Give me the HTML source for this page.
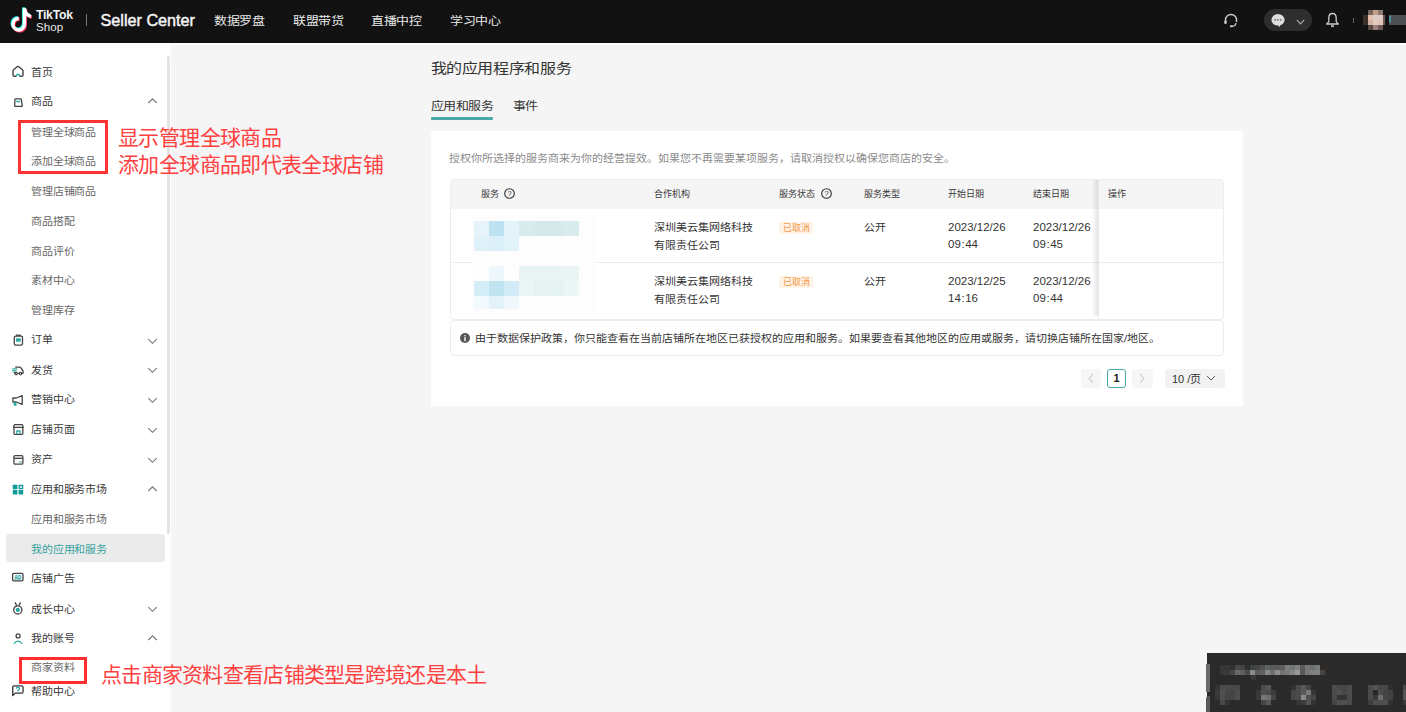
<!DOCTYPE html>
<html lang="zh-CN"><head><meta charset="utf-8">
<style>
*{margin:0;padding:0;box-sizing:border-box}
html,body{width:1406px;height:712px;overflow:hidden}
body{position:relative;background:#f5f5f5;font-family:"Liberation Sans",sans-serif;color:#333}
.a{position:absolute;white-space:nowrap}
#nav{position:absolute;left:0;top:0;width:1406px;height:43px;background:#121212}
#strip{position:absolute;left:0;top:43px;width:1406px;height:2px;background:#fff}
#side{position:absolute;left:0;top:45px;width:171px;height:667px;background:#fff}
.navt{position:absolute;top:13.3px;font-size:13px;letter-spacing:-0.27px;transform:scaleY(0.915);transform-origin:0 50%;line-height:16px;color:#e8e8e8}
.si{position:absolute;left:31px;margin-top:-0.5px;font-size:11px;letter-spacing:-0.15px;transform:scaleY(0.9);transform-origin:0 50%;line-height:14px;color:#383838}
.sub{color:#666}
.ico{position:absolute;left:11px;width:14px;height:14px}
.chev{position:absolute;left:147px;width:11px;height:7px}
.red{color:#ff4040;font-size:21px;letter-spacing:-0.62px;line-height:27.15px}
.th{position:absolute;top:188.2px;font-size:9px;font-weight:500;line-height:13px;color:#3a3a3a}
.td{position:absolute;font-size:11px;line-height:18.7px;transform:scaleY(0.92);transform-origin:0 50%;color:#333}
.selt{color:#36a3a0}
.tag{font-size:9px;line-height:12px;padding:0 3.5px;background:#fff3e6;color:#f29a4a;border-radius:2px}
.dt{position:absolute;font-size:11.5px;line-height:17px;color:#333}
</style></head><body>
<div id="nav">
  <!-- tiktok note -->
  <svg class="a" style="left:10px;top:5px" width="26" height="30" viewBox="0 0 26 30">
    <g fill="none" stroke-width="3.3">
      <g stroke="#25f4ee" transform="translate(-0.9,-0.9)"><path d="M14.5 3.5 V19.25 a5.75 5.75 0 1 1 -5.75 -5.75"/><path d="M14.5 3.5 C15 7.5 17.5 10.5 21 11.5"/></g>
      <g stroke="#fe2c55" transform="translate(0.9,0.9)"><path d="M14.5 3.5 V19.25 a5.75 5.75 0 1 1 -5.75 -5.75"/><path d="M14.5 3.5 C15 7.5 17.5 10.5 21 11.5"/></g>
      <g stroke="#fff"><path d="M14.5 3.5 V19.25 a5.75 5.75 0 1 1 -5.75 -5.75"/><path d="M14.5 3.5 C15 7.5 17.5 10.5 21 11.5"/></g>
    </g>
  </svg>
  <div class="a" style="left:36px;top:9px;font-size:12.3px;line-height:13px;font-weight:bold;color:#f4f4f4;letter-spacing:-0.3px">TikTok</div>
  <div class="a" style="left:36px;top:20px;font-size:11.6px;line-height:13px;color:#e6e6e6">Shop</div>
  <div class="a" style="left:86px;top:14px;width:1px;height:12px;background:#777"></div>
  <div class="a" style="left:100.5px;top:11.2px;font-size:16.2px;line-height:18px;color:#f6f6f6;-webkit-text-stroke:0.45px #f6f6f6">Seller Center</div>
  <div class="navt" style="left:214px">数据罗盘</div>
  <div class="navt" style="left:293px">联盟带货</div>
  <div class="navt" style="left:371px">直播中控</div>
  <div class="navt" style="left:450px">学习中心</div>
</div>
<div id="strip"></div>
<div id="side"></div>
<svg width="0" height="0" style="position:absolute">
<defs>
<g id="i-home" fill="none" stroke-width="1.4" stroke-linejoin="round"><path d="M5.4 11.2 H3.2 Q2 11.2 2 10 V5.9 Q2 5.2 2.6 4.7 L6.1 1.8 Q7 1.1 7.9 1.8 L11.4 4.7 Q12 5.2 12 5.9 V10 Q12 11.2 10.8 11.2 H8.6" stroke="#444"/><path d="M5.6 11.2 V10.6 a1.4 1.4 0 0 1 2.8 0 V11.2" stroke="#2aa6a0"/></g>
<g id="i-bag" fill="none" stroke-width="1.3" stroke-linejoin="round"><path d="M4.6 3.95 H9.7 Q10.3 3.95 10.4 4.6 L11.3 10.8 Q11.35 11.45 10.7 11.45 H4.3 Q3.65 11.45 3.7 10.8 L3.9 4.6 Q4 3.95 4.6 3.95 Z" stroke="#444"/><path d="M5.3 5.9 Q7.2 7.9 9.1 5.9" stroke="#2aa6a0"/></g>
<g id="i-order" fill="none" stroke-width="1.3" stroke-linejoin="round"><rect x="3.3" y="3.2" width="8.2" height="9" rx="1.4" stroke="#444"/><path d="M5.6 3.2 V2.2 H9.2 V3.2" stroke="#444"/><rect x="5.1" y="5.3" width="4.6" height="3.4" fill="#2aa6a0" stroke="none"/></g>
<g id="i-truck" fill="none" stroke-width="1.25" stroke-linejoin="round"><path d="M4.2 4.1 H8.4 Q9.3 4.1 9.9 4.9 L11.5 7 Q12.1 7.8 12.1 8.8 V10.3 H11 M7.9 10.3 H6.6 M3.8 10.3 H3.4 V9" stroke="#444"/><circle cx="5.2" cy="10.6" r="1.15" stroke="#444"/><circle cx="9.5" cy="10.6" r="1.15" stroke="#444"/><path d="M1.3 5.9 H6.2 M1 7.8 H5.6" stroke="#2aa6a0" stroke-width="1.2"/></g>
<g id="i-mega" fill="none" stroke-width="1.3" stroke-linejoin="round"><path d="M1.9 5 H5.2 L11.2 2.6 V11.4 L5.2 9 H1.9 Z" stroke="#444"/><path d="M3 9.2 L3.6 12.2 H5 L4.6 9.3" stroke="#2aa6a0" fill="#2aa6a0"/></g>
<g id="i-store" fill="none" stroke-width="1.3" stroke-linejoin="round"><path d="M3 5.3 V11.6 Q3 12.3 3.7 12.3 H11.1 Q11.8 12.3 11.8 11.6 V5.3 M2.6 5.4 H12.2 L11.6 3.2 Q11.4 2.6 10.8 2.6 H4 Q3.4 2.6 3.2 3.2 Z" stroke="#444"/><path d="M5.8 12.1 V9 H9 V12.1" stroke="#2aa6a0"/></g>
<g id="i-wallet" fill="none" stroke-width="1.3" stroke-linejoin="round"><rect x="2.9" y="3.6" width="9" height="8.6" rx="1.3" stroke="#444"/><path d="M2.9 6.3 H11.9" stroke="#444"/><path d="M8.4 10 H10.6" stroke="#2aa6a0"/></g>
<g id="i-apps" fill="#129c97"><rect x="1.8" y="2.7" width="4.6" height="4.6" rx="0.6"/><rect x="7.6" y="2.7" width="4.6" height="4.6" rx="0.6"/><rect x="1.8" y="7.9" width="4.6" height="4.6" rx="0.6"/><rect x="7.6" y="7.9" width="4.6" height="4.6" rx="0.6"/><circle cx="9.9" cy="5" r="1.1" fill="#fff"/></g>
<g id="i-ad" fill="none" stroke-width="1.3"><rect x="1.6" y="2.3" width="10.4" height="7.6" rx="1.3" stroke="#444"/><rect x="3.2" y="3.9" width="7.2" height="4.4" fill="#d9efee" stroke="none"/><text x="6.8" y="7.5" font-size="4.6" font-family="Liberation Sans" font-weight="bold" text-anchor="middle" fill="#2aa6a0" stroke="none">AD</text><path d="M3.4 8.1 H10.2" stroke="#2aa6a0" stroke-width="0.8"/></g>
<g id="i-medal" fill="none" stroke-width="1.3"><circle cx="6.8" cy="8.9" r="4.1" stroke="#444"/><circle cx="6.8" cy="8.9" r="2.1" fill="#2aa6a0" stroke="none"/><path d="M4 1.4 L5.7 4.6 M9.6 1.4 L7.9 4.6" stroke="#444"/></g>
<g id="i-user" fill="none" stroke-width="1.3"><circle cx="7.1" cy="4.9" r="2" stroke="#444"/><path d="M2.9 12.6 Q7.1 7.6 11.3 12.6" stroke="#2aa6a0"/></g>
<g id="i-help" fill="none" stroke-width="1.3" stroke-linejoin="round"><path d="M3.1 1.85 H10.6 Q12.05 1.85 12.05 3.3 V7.7 Q12.05 9.15 10.6 9.15 H4.2 L1.75 11.6 V3.3 Q1.75 1.85 3.1 1.85 Z" stroke="#333"/><path d="M5.3 4.7 Q5.4 3.2 6.9 3.2 Q8.5 3.2 8.5 4.5 Q8.5 5.4 7.5 5.9 Q6.9 6.2 6.9 7" stroke="#2aa6a0" stroke-width="1.25"/><circle cx="6.9" cy="8.1" r="0.65" fill="#2aa6a0" stroke="none"/></g>
<path id="c-up" d="M1.3 5 L5.5 0.8 L9.7 5" fill="none" stroke="#777" stroke-width="1.1"/>
<path id="c-down" d="M1.3 2.1 L5.5 6.3 L9.7 2.1" fill="none" stroke="#777" stroke-width="1.1"/>
</defs></svg>
<div class="a" style="left:167px;top:56px;width:3px;height:478px;background:#e4e4e4;border-radius:2px"></div>
<div class="si" style="top:65.05px">首页</div>
<svg class="ico" style="top:64.8px" viewBox="0 0 14 14"><use href="#i-home"/></svg>
<div class="si" style="top:94.1px">商品</div>
<svg class="ico" style="top:94.6px" viewBox="0 0 14 14"><use href="#i-bag"/></svg>
<svg class="chev" style="top:98.1px" viewBox="0 0 11 7"><use href="#c-up"/></svg>
<div class="si sub" style="top:125.15px">管理全球商品</div>
<div class="si sub" style="top:154.2px">添加全球商品</div>
<div class="si sub" style="top:184.0px">管理店铺商品</div>
<div class="si sub" style="top:214.05px">商品搭配</div>
<div class="si sub" style="top:244.1px">商品评价</div>
<div class="si sub" style="top:273.4px">素材中心</div>
<div class="si sub" style="top:303.2px">管理库存</div>
<div class="si" style="top:332.0px">订单</div>
<svg class="ico" style="top:333.0px" viewBox="0 0 14 14"><use href="#i-order"/></svg>
<svg class="chev" style="top:336.5px" viewBox="0 0 11 7"><use href="#c-down"/></svg>
<div class="si" style="top:363.05px">发货</div>
<svg class="ico" style="top:362.8px" viewBox="0 0 14 14"><use href="#i-truck"/></svg>
<svg class="chev" style="top:366.3px" viewBox="0 0 11 7"><use href="#c-down"/></svg>
<div class="si" style="top:392.1px">营销中心</div>
<svg class="ico" style="top:392.6px" viewBox="0 0 14 14"><use href="#i-mega"/></svg>
<svg class="chev" style="top:396.1px" viewBox="0 0 11 7"><use href="#c-down"/></svg>
<div class="si" style="top:422.15px">店铺页面</div>
<svg class="ico" style="top:422.4px" viewBox="0 0 14 14"><use href="#i-store"/></svg>
<svg class="chev" style="top:425.9px" viewBox="0 0 11 7"><use href="#c-down"/></svg>
<div class="si" style="top:452.2px">资产</div>
<svg class="ico" style="top:452.2px" viewBox="0 0 14 14"><use href="#i-wallet"/></svg>
<svg class="chev" style="top:455.7px" viewBox="0 0 11 7"><use href="#c-down"/></svg>
<div class="si" style="top:482.0px">应用和服务市场</div>
<svg class="ico" style="top:482.0px" viewBox="0 0 14 14"><use href="#i-apps"/></svg>
<svg class="chev" style="top:485.5px" viewBox="0 0 11 7"><use href="#c-up"/></svg>
<div class="si sub" style="top:512.05px">应用和服务市场</div>
<div class="a" style="left:5.5px;top:534.2px;width:159.7px;height:27.8px;background:#ebebeb;border-radius:3.5px"></div>
<div class="si selt" style="top:542.1px">我的应用和服务</div>
<div class="si" style="top:571.4px">店铺广告</div>
<svg class="ico" style="top:571.4px" viewBox="0 0 14 14"><use href="#i-ad"/></svg>
<div class="si" style="top:602.2px">成长中心</div>
<svg class="ico" style="top:601.2px" viewBox="0 0 14 14"><use href="#i-medal"/></svg>
<svg class="chev" style="top:604.7px" viewBox="0 0 11 7"><use href="#c-down"/></svg>
<div class="si" style="top:631.0px">我的账号</div>
<svg class="ico" style="top:631.0px" viewBox="0 0 14 14"><use href="#i-user"/></svg>
<svg class="chev" style="top:634.5px" viewBox="0 0 11 7"><use href="#c-up"/></svg>
<div class="si sub" style="top:660.05px">商家资料</div>
<svg class="ico" style="top:684px" viewBox="0 0 14 14"><use href="#i-help"/></svg>
<div class="si" style="top:684.0px">帮助中心</div>
<!-- main -->
<div class="a" style="left:430.5px;top:60px;font-size:16px;letter-spacing:-0.35px;line-height:18px;transform:scaleY(0.84);transform-origin:0 50%;color:#333">我的应用程序和服务</div>
<div class="a" style="left:430.5px;top:99px;font-size:13px;letter-spacing:-0.4px;line-height:15px;transform:scaleY(0.85);transform-origin:0 50%;color:#333">应用和服务</div>
<div class="a" style="left:512.5px;top:99px;font-size:13px;letter-spacing:-0.4px;line-height:15px;transform:scaleY(0.85);transform-origin:0 50%;color:#333">事件</div>
<div class="a" style="left:431px;top:117px;width:62px;height:2.5px;background:#4aa9a7;border-radius:1px"></div>
<div id="card" class="a" style="left:431px;top:131px;width:812px;height:275px;background:#fff"></div>
<div class="a" style="left:449px;top:150.8px;font-size:11px;line-height:14px;color:#8a8a8a;transform:scaleY(0.91);transform-origin:0 50%">授权你所选择的服务商来为你的经营提效。如果您不再需要某项服务，请取消授权以确保您商店的安全。</div>
<div class="a" style="left:450px;top:178.5px;width:774px;height:141px;border:1px solid #ececec;border-radius:4px;overflow:hidden">
  <div class="a" style="left:0;top:0;width:774px;height:29.3px;background:#f5f5f5"></div>
  <div class="a" style="left:0;top:82.8px;width:774px;height:1px;background:#ececec"></div>
</div>

<div class="a" style="left:472px;top:215px;width:124px;height:48px;background:#fdfdfd"></div>
<div class="a" style="left:472px;top:262px;width:124px;height:50px;background:#fdfdfd"></div>
<div class="a" style="left:474px;top:221px;width:15px;height:15px;background:#e6f4fa"></div>
<div class="a" style="left:489px;top:221px;width:15px;height:15px;background:#bde2f1"></div>
<div class="a" style="left:504px;top:221px;width:15px;height:15px;background:#e4f3f9"></div>
<div class="a" style="left:519px;top:221px;width:15px;height:15px;background:#d8ebeb"></div>
<div class="a" style="left:534px;top:221px;width:15px;height:15px;background:#d5e9e9"></div>
<div class="a" style="left:549px;top:221px;width:15px;height:15px;background:#d6e9e9"></div>
<div class="a" style="left:564px;top:221px;width:15px;height:15px;background:#d9ebeb"></div>
<div class="a" style="left:474px;top:236px;width:15px;height:15px;background:#dff1f9"></div>
<div class="a" style="left:489px;top:236px;width:15px;height:15px;background:#daeff8"></div>
<div class="a" style="left:504px;top:236px;width:15px;height:15px;background:#e2f2f9"></div>
<div class="a" style="left:489px;top:266px;width:15px;height:15px;background:#eef7fb"></div>
<div class="a" style="left:519px;top:266px;width:15px;height:15px;background:#e8f3f3"></div>
<div class="a" style="left:534px;top:266px;width:15px;height:15px;background:#e8f3f3"></div>
<div class="a" style="left:549px;top:266px;width:15px;height:15px;background:#e8f3f3"></div>
<div class="a" style="left:564px;top:266px;width:15px;height:15px;background:#eaf4f4"></div>
<div class="a" style="left:474px;top:281px;width:15px;height:15px;background:#d4edf6"></div>
<div class="a" style="left:489px;top:281px;width:15px;height:15px;background:#bfe3ef"></div>
<div class="a" style="left:504px;top:281px;width:15px;height:15px;background:#d3ebf6"></div>
<div class="a" style="left:519px;top:281px;width:15px;height:15px;background:#ecf5f5"></div>
<div class="a" style="left:534px;top:281px;width:15px;height:15px;background:#e7f3f3"></div>
<div class="a" style="left:549px;top:281px;width:15px;height:15px;background:#e5f2f2"></div>
<div class="a" style="left:564px;top:281px;width:15px;height:15px;background:#edf6f6"></div>
<div class="a" style="left:474px;top:296px;width:15px;height:13px;background:#f3fafd"></div>
<div class="a" style="left:489px;top:296px;width:15px;height:13px;background:#e2f2f8"></div>
<div class="a" style="left:504px;top:296px;width:15px;height:13px;background:#f0f8fb"></div>
<div class="th" style="left:481px">服务</div><svg class="a" style="left:504px;top:188px" width="11" height="11" viewBox="0 0 11 11"><circle cx="5.5" cy="5.5" r="4.8" fill="none" stroke="#333" stroke-width="1.1"/><text x="5.5" y="8.3" font-size="7.5" font-family="Liberation Sans" text-anchor="middle" fill="#333">?</text></svg>
<div class="th" style="left:654px">合作机构</div>
<div class="th" style="left:779px">服务状态</div><svg class="a" style="left:820.5px;top:188px" width="11" height="11" viewBox="0 0 11 11"><circle cx="5.5" cy="5.5" r="4.8" fill="none" stroke="#333" stroke-width="1.1"/><text x="5.5" y="8.3" font-size="7.5" font-family="Liberation Sans" text-anchor="middle" fill="#333">?</text></svg>
<div class="th" style="left:864px">服务类型</div>
<div class="th" style="left:948px">开始日期</div>
<div class="th" style="left:1033px">结束日期</div>
<div class="a" style="left:1092px;top:179.5px;width:6px;height:136px;background:linear-gradient(to right,rgba(0,0,0,0),rgba(0,0,0,0.1))"></div>
<div class="a" style="left:1098px;top:179.5px;width:1px;height:139px;background:#e8e8e8"></div>
<div class="th" style="left:1108px">操作</div>
<div class="td" style="left:654px;top:217.6px">深圳美云集网络科技<br>有限责任公司</div>
<div class="td" style="left:654px;top:271.8px">深圳美云集网络科技<br>有限责任公司</div>
<div class="a tag" style="left:779px;top:222px">已取消</div>
<div class="a tag" style="left:779px;top:276.3px">已取消</div>
<div class="td" style="left:864px;top:217.6px">公开</div>
<div class="td" style="left:864px;top:271.8px">公开</div>
<div class="dt" style="left:948px;top:219px">2023/12/26<br>09<span style="margin:0 0.6px">:</span>44</div>
<div class="dt" style="left:1033px;top:219px">2023/12/26<br>09<span style="margin:0 0.6px">:</span>45</div>
<div class="dt" style="left:948px;top:273.3px">2023/12/25<br>14<span style="margin:0 0.6px">:</span>16</div>
<div class="dt" style="left:1033px;top:273.3px">2023/12/26<br>09<span style="margin:0 0.6px">:</span>44</div>
<div class="a" style="left:450px;top:320px;width:774px;height:35.5px;border:1px solid #ececec;border-radius:4px"></div>
<svg class="a" style="left:460px;top:332.5px" width="10" height="10" viewBox="0 0 10 10"><circle cx="5" cy="5" r="5" fill="#555"/><rect x="4.3" y="4.2" width="1.4" height="4" fill="#fff"/><circle cx="5" cy="2.7" r="0.8" fill="#fff"/></svg>
<div class="a" style="left:475px;top:330.5px;font-size:11px;font-weight:500;line-height:14px;color:#333;transform:scaleY(0.88);transform-origin:0 50%">由于数据保护政策，你只能查看在当前店铺所在地区已获授权的应用和服务。如果要查看其他地区的应用或服务，请切换店铺所在国家/地区。</div>
<div class="a" style="left:1081px;top:369px;width:20px;height:18.5px;background:#f6f6f6;border-radius:3px"></div>
<svg class="a" style="left:1087px;top:373px" width="8" height="11" viewBox="0 0 8 11"><path d="M6 1 L2 5.5 L6 10" fill="none" stroke="#bbb" stroke-width="1"/></svg>
<div class="a" style="left:1107px;top:369px;width:19px;height:18.5px;border:1.3px solid #4aa9a7;border-radius:3px;font-size:11px;font-weight:bold;line-height:16px;text-align:center;color:#222">1</div>
<div class="a" style="left:1132px;top:369px;width:20.5px;height:18.5px;background:#f6f6f6;border-radius:3px"></div>
<svg class="a" style="left:1138px;top:373px" width="8" height="11" viewBox="0 0 8 11"><path d="M2 1 L6 5.5 L2 10" fill="none" stroke="#bbb" stroke-width="1"/></svg>
<div class="a" style="left:1165px;top:369px;width:60px;height:18.5px;background:#f2f2f2;border-radius:3px"></div>
<div class="a" style="left:1172px;top:372px;font-size:11px;line-height:15px;color:#333">10 /页</div>
<svg class="a" style="left:1206px;top:375px" width="10" height="7" viewBox="0 0 10 7"><path d="M1 1 L5 5 L9 1" fill="none" stroke="#555" stroke-width="1"/></svg>
<!-- red annotations -->
<div class="a" style="left:18px;top:120px;width:90px;height:54.4px;border:3px solid #ff3333"></div>
<div class="a red" style="left:118px;top:124px">显示管理全球商品<br>添加全球商品即代表全球店铺</div>
<div class="a" style="left:19px;top:657px;width:68px;height:26.5px;border:3px solid #ff2f2f"></div>
<div class="a red" style="left:101px;top:661.3px;letter-spacing:-0.71px">点击商家资料查看店铺类型是跨境还是本土</div>
<!-- nav right -->
<svg class="a" style="left:1223px;top:13px" width="16" height="15" viewBox="0 0 16 15"><path d="M2.5 9 V7 a5.5 5.5 0 0 1 11 0 V9" fill="none" stroke="#ccc" stroke-width="1.4"/><rect x="1.3" y="7.5" width="2.4" height="3.5" rx="1" fill="#ccc"/><path d="M13 10 Q12.5 13.3 9 13.3" fill="none" stroke="#ccc" stroke-width="1.3"/><rect x="6.8" y="12.3" width="3" height="2" rx="1" fill="#ccc"/></svg>
<div class="a" style="left:1264px;top:9px;width:48px;height:22px;background:#2e2e2e;border-radius:11px"></div>
<svg class="a" style="left:1270px;top:13px" width="16" height="16" viewBox="0 0 16 16"><ellipse cx="8" cy="6.8" rx="6.6" ry="5.8" fill="#ddd"/><path d="M7.5 11.5 L9.6 14.3 L10.2 11" fill="#ddd"/><circle cx="5.2" cy="6.8" r="0.9" fill="#666"/><circle cx="8" cy="6.8" r="0.9" fill="#666"/><circle cx="10.8" cy="6.8" r="0.9" fill="#666"/></svg>
<svg class="a" style="left:1296px;top:19px" width="9" height="6" viewBox="0 0 9 6"><path d="M0.8 0.8 L4.5 4.8 L8.2 0.8" fill="none" stroke="#aaa" stroke-width="1.2"/></svg>
<svg class="a" style="left:1325px;top:12px" width="16" height="16" viewBox="0 0 16 16"><path d="M1.6 12 H13.4 Q12 11 11.2 9.5 V6 Q11.2 1.5 7.5 1.5 Q3.8 1.5 3.8 6 V9.5 Q3 11 1.6 12 Z" fill="none" stroke="#ccc" stroke-width="1.3" stroke-linejoin="round"/><rect x="6" y="13.3" width="3" height="1.6" rx="0.6" fill="#ccc"/></svg>
<div class="a" style="left:1353px;top:18px;width:1px;height:5px;background:#667"></div>
<div class="a" style="left:1368px;top:10px;width:5px;height:5px;background:#7a675b"></div>
<div class="a" style="left:1373px;top:10px;width:5px;height:5px;background:#c09f8b"></div>
<div class="a" style="left:1378px;top:10px;width:5px;height:5px;background:#8f7c70"></div>
<div class="a" style="left:1363px;top:15px;width:5px;height:5px;background:#3d2f2a"></div>
<div class="a" style="left:1368px;top:15px;width:5px;height:5px;background:#e7bfae"></div>
<div class="a" style="left:1373px;top:15px;width:5px;height:5px;background:#d9ccc8"></div>
<div class="a" style="left:1378px;top:15px;width:5px;height:5px;background:#dfcbbf"></div>
<div class="a" style="left:1363px;top:20px;width:5px;height:5px;background:#3d2f2a"></div>
<div class="a" style="left:1368px;top:20px;width:5px;height:5px;background:#d3b2a6"></div>
<div class="a" style="left:1373px;top:20px;width:5px;height:5px;background:#e5c8bd"></div>
<div class="a" style="left:1378px;top:20px;width:5px;height:5px;background:#e0c4b8"></div>
<div class="a" style="left:1368px;top:25px;width:5px;height:5px;background:#5a4a44"></div>
<div class="a" style="left:1373px;top:25px;width:5px;height:5px;background:#9d7e7c"></div>
<div class="a" style="left:1378px;top:25px;width:5px;height:5px;background:#6e5955"></div>
<div class="a" style="left:1383px;top:15px;width:2px;height:10px;background:#6e5a54"></div>
<div class="a" style="left:1389px;top:15px;width:17px;height:10px;background:#4d5151"></div>
<div class="a" style="left:1389px;top:15px;width:2px;height:8px;background:#4a8ea0;border-radius:2px 0 0 2px"></div>
<!-- bottom right widget -->
<div class="a" style="left:1207px;top:653px;width:199px;height:59px;background:#2a2a2a"></div>
<div class="a" style="left:1205.5px;top:664px;width:4.5px;height:28px;background:#6a6a6a"></div>
<div class="a" style="left:1205.5px;top:696px;width:4.5px;height:16px;background:#5a5a5a;border-radius:3px 0 0 0"></div>
<div class="a" style="left:1220px;top:665px;width:5px;height:5px;background:#363636"></div>
<div class="a" style="left:1225px;top:665px;width:5px;height:5px;background:#363636"></div>
<div class="a" style="left:1230px;top:665px;width:5px;height:5px;background:#2e3032"></div>
<div class="a" style="left:1235px;top:665px;width:5px;height:5px;background:#474747"></div>
<div class="a" style="left:1240px;top:665px;width:5px;height:5px;background:#434240"></div>
<div class="a" style="left:1245px;top:665px;width:5px;height:5px;background:#2e302f"></div>
<div class="a" style="left:1250px;top:665px;width:5px;height:5px;background:#3d4242"></div>
<div class="a" style="left:1255px;top:665px;width:5px;height:5px;background:#464848"></div>
<div class="a" style="left:1260px;top:665px;width:5px;height:5px;background:#515151"></div>
<div class="a" style="left:1265px;top:665px;width:5px;height:5px;background:#5e6262"></div>
<div class="a" style="left:1270px;top:665px;width:5px;height:5px;background:#5a5c5c"></div>
<div class="a" style="left:1275px;top:665px;width:5px;height:5px;background:#5a5a5a"></div>
<div class="a" style="left:1280px;top:665px;width:5px;height:5px;background:#5e6060"></div>
<div class="a" style="left:1285px;top:665px;width:5px;height:5px;background:#7b7b7b"></div>
<div class="a" style="left:1290px;top:665px;width:5px;height:5px;background:#717777"></div>
<div class="a" style="left:1295px;top:665px;width:5px;height:5px;background:#7f807c"></div>
<div class="a" style="left:1300px;top:665px;width:5px;height:5px;background:#5a5a5c"></div>
<div class="a" style="left:1305px;top:665px;width:5px;height:5px;background:#787574"></div>
<div class="a" style="left:1310px;top:665px;width:5px;height:5px;background:#6c6f72"></div>
<div class="a" style="left:1315px;top:665px;width:5px;height:5px;background:#7a7a78"></div>
<div class="a" style="left:1320px;top:665px;width:5px;height:5px;background:#2e2a28"></div>
<div class="a" style="left:1220px;top:670px;width:5px;height:5px;background:#363636"></div>
<div class="a" style="left:1225px;top:670px;width:5px;height:5px;background:#3a3a3a"></div>
<div class="a" style="left:1230px;top:670px;width:5px;height:5px;background:#424850"></div>
<div class="a" style="left:1235px;top:670px;width:5px;height:5px;background:#6a6868"></div>
<div class="a" style="left:1240px;top:670px;width:5px;height:5px;background:#5e5e5a"></div>
<div class="a" style="left:1245px;top:670px;width:5px;height:5px;background:#4a4a46"></div>
<div class="a" style="left:1250px;top:670px;width:5px;height:5px;background:#8a8a88"></div>
<div class="a" style="left:1255px;top:670px;width:5px;height:5px;background:#5c5c5c"></div>
<div class="a" style="left:1260px;top:670px;width:5px;height:5px;background:#65605c"></div>
<div class="a" style="left:1265px;top:670px;width:5px;height:5px;background:#848a8c"></div>
<div class="a" style="left:1270px;top:670px;width:5px;height:5px;background:#6e706e"></div>
<div class="a" style="left:1275px;top:670px;width:5px;height:5px;background:#8b8d8c"></div>
<div class="a" style="left:1280px;top:670px;width:5px;height:5px;background:#6e7478"></div>
<div class="a" style="left:1285px;top:670px;width:5px;height:5px;background:#7f7c78"></div>
<div class="a" style="left:1290px;top:670px;width:5px;height:5px;background:#868684"></div>
<div class="a" style="left:1295px;top:670px;width:5px;height:5px;background:#9a9a98"></div>
<div class="a" style="left:1300px;top:670px;width:5px;height:5px;background:#5a5858"></div>
<div class="a" style="left:1305px;top:670px;width:5px;height:5px;background:#7a7676"></div>
<div class="a" style="left:1310px;top:670px;width:5px;height:5px;background:#7e8080"></div>
<div class="a" style="left:1315px;top:670px;width:5px;height:5px;background:#7e8486"></div>
<div class="a" style="left:1320px;top:670px;width:5px;height:5px;background:#48443e"></div>
<div class="a" style="left:1251px;top:675px;width:5px;height:5px;background:#3a3a38"></div>
<div class="a" style="left:1215px;top:685px;width:5px;height:5px;background:#333"></div>
<div class="a" style="left:1220px;top:685px;width:5px;height:5px;background:#4c4c4c"></div>
<div class="a" style="left:1225px;top:685px;width:5px;height:5px;background:#4c4c4c"></div>
<div class="a" style="left:1230px;top:685px;width:5px;height:5px;background:#4a4a4a"></div>
<div class="a" style="left:1235px;top:685px;width:5px;height:5px;background:#484848"></div>
<div class="a" style="left:1215px;top:690px;width:5px;height:5px;background:#3a3a3a"></div>
<div class="a" style="left:1220px;top:690px;width:5px;height:5px;background:#505050"></div>
<div class="a" style="left:1225px;top:690px;width:5px;height:5px;background:#474747"></div>
<div class="a" style="left:1230px;top:690px;width:5px;height:5px;background:#444"></div>
<div class="a" style="left:1235px;top:690px;width:5px;height:5px;background:#4c4c4c"></div>
<div class="a" style="left:1215px;top:695px;width:5px;height:5px;background:#363636"></div>
<div class="a" style="left:1220px;top:695px;width:5px;height:5px;background:#4e4e4e"></div>
<div class="a" style="left:1225px;top:695px;width:5px;height:5px;background:#444"></div>
<div class="a" style="left:1230px;top:695px;width:5px;height:5px;background:#454545"></div>
<div class="a" style="left:1235px;top:695px;width:5px;height:5px;background:#4e4e4e"></div>
<div class="a" style="left:1220px;top:700px;width:5px;height:5px;background:#484848"></div>
<div class="a" style="left:1225px;top:700px;width:5px;height:5px;background:#333"></div>
<div class="a" style="left:1261px;top:685px;width:5px;height:5px;background:#4a4a4a"></div>
<div class="a" style="left:1266px;top:685px;width:5px;height:5px;background:#555"></div>
<div class="a" style="left:1256px;top:690px;width:5px;height:5px;background:#383838"></div>
<div class="a" style="left:1261px;top:690px;width:5px;height:5px;background:#505050"></div>
<div class="a" style="left:1266px;top:690px;width:5px;height:5px;background:#4a4a4a"></div>
<div class="a" style="left:1271px;top:690px;width:5px;height:5px;background:#3c3c3c"></div>
<div class="a" style="left:1256px;top:695px;width:5px;height:5px;background:#383838"></div>
<div class="a" style="left:1261px;top:695px;width:5px;height:5px;background:#777"></div>
<div class="a" style="left:1266px;top:695px;width:5px;height:5px;background:#6e6e6e"></div>
<div class="a" style="left:1271px;top:695px;width:5px;height:5px;background:#454545"></div>
<div class="a" style="left:1261px;top:700px;width:5px;height:5px;background:#474747"></div>
<div class="a" style="left:1266px;top:700px;width:5px;height:5px;background:#585858"></div>
<div class="a" style="left:1291px;top:685px;width:5px;height:5px;background:#333"></div>
<div class="a" style="left:1296px;top:685px;width:5px;height:5px;background:#4a4a4a"></div>
<div class="a" style="left:1301px;top:685px;width:5px;height:5px;background:#575757"></div>
<div class="a" style="left:1306px;top:685px;width:5px;height:5px;background:#444"></div>
<div class="a" style="left:1291px;top:690px;width:5px;height:5px;background:#454545"></div>
<div class="a" style="left:1296px;top:690px;width:5px;height:5px;background:#4a4a4a"></div>
<div class="a" style="left:1301px;top:690px;width:5px;height:5px;background:#5a5a5a"></div>
<div class="a" style="left:1306px;top:690px;width:5px;height:5px;background:#7a7a7a"></div>
<div class="a" style="left:1311px;top:690px;width:5px;height:5px;background:#383838"></div>
<div class="a" style="left:1291px;top:695px;width:5px;height:5px;background:#454545"></div>
<div class="a" style="left:1296px;top:695px;width:5px;height:5px;background:#4c4c4c"></div>
<div class="a" style="left:1301px;top:695px;width:5px;height:5px;background:#8a8a8a"></div>
<div class="a" style="left:1306px;top:695px;width:5px;height:5px;background:#505050"></div>
<div class="a" style="left:1311px;top:695px;width:5px;height:5px;background:#454545"></div>
<div class="a" style="left:1296px;top:700px;width:5px;height:5px;background:#353535"></div>
<div class="a" style="left:1301px;top:700px;width:5px;height:5px;background:#3c3c3c"></div>
<div class="a" style="left:1306px;top:700px;width:5px;height:5px;background:#555"></div>
<div class="a" style="left:1311px;top:700px;width:5px;height:5px;background:#333"></div>
<div class="a" style="left:1332px;top:685px;width:5px;height:5px;background:#4c4c4c"></div>
<div class="a" style="left:1337px;top:685px;width:5px;height:5px;background:#484848"></div>
<div class="a" style="left:1342px;top:685px;width:5px;height:5px;background:#464646"></div>
<div class="a" style="left:1347px;top:685px;width:5px;height:5px;background:#4c4c4c"></div>
<div class="a" style="left:1332px;top:690px;width:5px;height:5px;background:#4a4a4a"></div>
<div class="a" style="left:1337px;top:690px;width:5px;height:5px;background:#505050"></div>
<div class="a" style="left:1342px;top:690px;width:5px;height:5px;background:#474747"></div>
<div class="a" style="left:1347px;top:690px;width:5px;height:5px;background:#4c4c4c"></div>
<div class="a" style="left:1332px;top:695px;width:5px;height:5px;background:#4a4a4a"></div>
<div class="a" style="left:1337px;top:695px;width:5px;height:5px;background:#333634"></div>
<div class="a" style="left:1342px;top:695px;width:5px;height:5px;background:#343434"></div>
<div class="a" style="left:1347px;top:695px;width:5px;height:5px;background:#4c4c4c"></div>
<div class="a" style="left:1332px;top:700px;width:5px;height:5px;background:#444"></div>
<div class="a" style="left:1337px;top:700px;width:5px;height:5px;background:#505050"></div>
<div class="a" style="left:1342px;top:700px;width:5px;height:5px;background:#505050"></div>
<div class="a" style="left:1347px;top:700px;width:5px;height:5px;background:#484848"></div>
<div class="a" style="left:1368px;top:685px;width:5px;height:5px;background:#4a4a4a"></div>
<div class="a" style="left:1373px;top:685px;width:5px;height:5px;background:#555"></div>
<div class="a" style="left:1378px;top:685px;width:5px;height:5px;background:#474747"></div>
<div class="a" style="left:1383px;top:685px;width:5px;height:5px;background:#484848"></div>
<div class="a" style="left:1388px;top:685px;width:5px;height:5px;background:#2f2f2f"></div>
<div class="a" style="left:1368px;top:690px;width:5px;height:5px;background:#4a4a4a"></div>
<div class="a" style="left:1373px;top:690px;width:5px;height:5px;background:#262a28"></div>
<div class="a" style="left:1378px;top:690px;width:5px;height:5px;background:#4d4f4f"></div>
<div class="a" style="left:1383px;top:690px;width:5px;height:5px;background:#454545"></div>
<div class="a" style="left:1388px;top:690px;width:5px;height:5px;background:#3f4240"></div>
<div class="a" style="left:1368px;top:695px;width:5px;height:5px;background:#4c4c4c"></div>
<div class="a" style="left:1373px;top:695px;width:5px;height:5px;background:#3a3a3a"></div>
<div class="a" style="left:1378px;top:695px;width:5px;height:5px;background:#6e6e6e"></div>
<div class="a" style="left:1383px;top:695px;width:5px;height:5px;background:#464646"></div>
<div class="a" style="left:1388px;top:695px;width:5px;height:5px;background:#3f4240"></div>
<div class="a" style="left:1368px;top:700px;width:5px;height:5px;background:#3e3e3e"></div>
<div class="a" style="left:1373px;top:700px;width:5px;height:5px;background:#4e4e4e"></div>
<div class="a" style="left:1378px;top:700px;width:5px;height:5px;background:#4e4e4e"></div>
<div class="a" style="left:1383px;top:700px;width:5px;height:5px;background:#505050"></div>
<div class="a" style="left:1388px;top:700px;width:5px;height:5px;background:#333"></div>
<div class="a" style="left:1403px;top:685px;width:5px;height:5px;background:#484848"></div>
<div class="a" style="left:1403px;top:690px;width:5px;height:5px;background:#555"></div>
<div class="a" style="left:1403px;top:695px;width:5px;height:5px;background:#555"></div>
<div class="a" style="left:1403px;top:700px;width:5px;height:5px;background:#3a3a3a"></div>
</body></html>
